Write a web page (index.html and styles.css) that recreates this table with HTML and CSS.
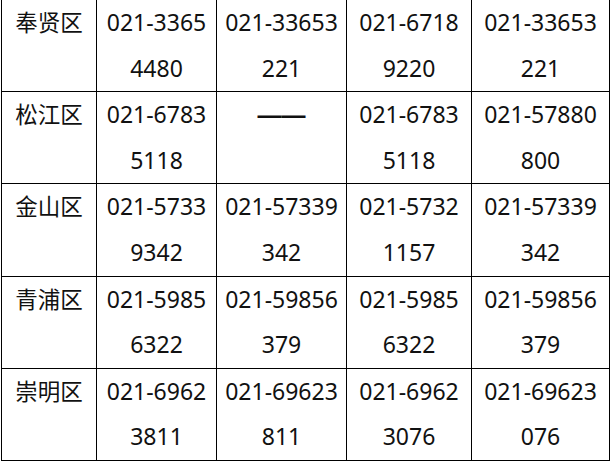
FILE: index.html
```html
<!DOCTYPE html>
<html lang="zh-CN">
<head>
<meta charset="utf-8">
<title>电话表</title>
<link rel="stylesheet" href="styles.css">
</head>
<body>
<div class="grid">
  <div class="cell name">奉贤区</div>
  <div class="cell">021-3365<br>4480</div>
  <div class="cell">021-33653<br>221</div>
  <div class="cell">021-6718<br>9220</div>
  <div class="cell">021-33653<br>221</div>

  <div class="cell name">松江区</div>
  <div class="cell">021-6783<br>5118</div>
  <div class="cell"><span class="dash">——</span></div>
  <div class="cell">021-6783<br>5118</div>
  <div class="cell">021-57880<br>800</div>

  <div class="cell name">金山区</div>
  <div class="cell">021-5733<br>9342</div>
  <div class="cell">021-57339<br>342</div>
  <div class="cell">021-5732<br>1157</div>
  <div class="cell">021-57339<br>342</div>

  <div class="cell name">青浦区</div>
  <div class="cell">021-5985<br>6322</div>
  <div class="cell">021-59856<br>379</div>
  <div class="cell">021-5985<br>6322</div>
  <div class="cell">021-59856<br>379</div>

  <div class="cell name">崇明区</div>
  <div class="cell">021-6962<br>3811</div>
  <div class="cell">021-69623<br>811</div>
  <div class="cell">021-6962<br>3076</div>
  <div class="cell">021-69623<br>076</div>
</div>
</body>
</html>
```

FILE: styles.css
```css
html, body {
  margin: 0;
  padding: 0;
  background: #ffffff;
}

body {
  font-family: "Noto Sans", "Noto Sans CJK SC", sans-serif;
  font-size: 23px;
  color: #111111;
  overflow: hidden;
}

.grid {
  display: grid;
  grid-template-columns: 95px 120px 130px 125px 138px;
  grid-auto-rows: 92.2px;
  width: max-content;
  margin: -1px 0 0 1px;
  border-left: 1px solid #000;
  border-top: 1px solid #000;
}

.cell {
  border-right: 1px solid #000;
  border-bottom: 1px solid #000;
  line-height: 45.6px;
  text-align: center;
  white-space: nowrap;
}

.name {
  font-size: 22.5px;
}

.dash {
  font-family: "Liberation Sans", sans-serif;
  font-size: 24px;
  font-weight: bold;
}
```
